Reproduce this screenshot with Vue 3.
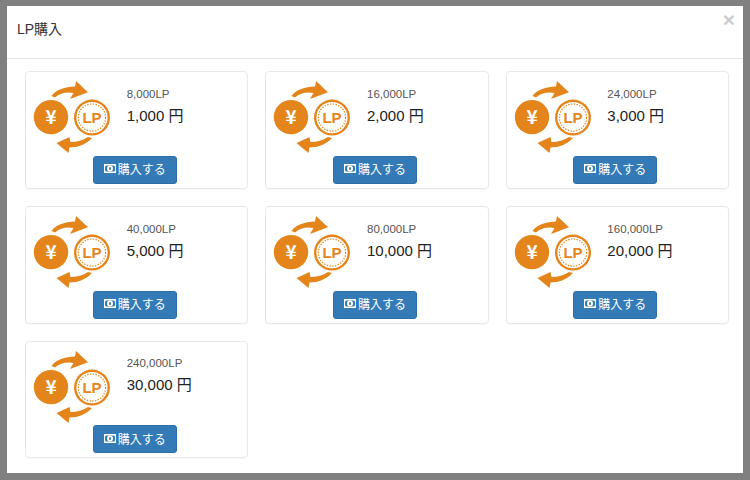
<template>
  <div class="overlay">
    <div class="modal">
      <div class="modal-header">
        <h4 class="modal-title">LP購入</h4>
        <span class="close">×</span>
      </div>
      <div class="modal-body">
        <div v-for="plan in plans" :key="plan.lp" class="plan">
          <div class="plan-top">
            <svg class="plan-icon" width="100.7" height="83.6" viewBox="26 72.4 100.7 83.6">
              <circle cx="51" cy="117.5" r="17.2" fill="#e4851b" />
              <text x="51" y="124.5" class="yen">¥</text>
              <circle cx="92" cy="118" r="18" fill="#e4851b" />
              <circle cx="92" cy="118" r="15.6" fill="#fff" />
              <circle cx="92" cy="118" r="13.6" fill="none" stroke="#e4851b" stroke-width="1.2" stroke-dasharray="1.4 1.4" />
              <text x="92" y="123.5" class="lp">LP</text>
              <path d="M51.5 96.5 C56 90 65 87.5 75 87 L76 81.5 L88 92.7 L70 99.5 L73.5 93.5 C67 92 60 93.5 55 98 Z" fill="#e4851b" />
              <path d="M92 138.5 C86 145 78 148 69.5 148 L68.5 153.5 L56.5 143.3 L69.5 137.3 L70.5 142.5 C77 142.5 83 141 88 137.5 Z" fill="#e4851b" />
            </svg>
            <div class="plan-info">
              <div class="plan-lp">{{ plan.lp }}LP</div>
              <div class="plan-price">{{ plan.price }} 円</div>
            </div>
          </div>
          <button class="buy-button">
            <svg width="12" height="9" viewBox="0 0 12 9">
              <rect width="12" height="9" fill="#fff" />
              <rect x="1" y="1.5" width="10" height="6" rx="1.5" fill="#337ab7" />
              <circle cx="6" cy="4.5" r="3" fill="#fff" />
              <ellipse cx="6" cy="4.5" rx="1" ry="1.6" fill="#337ab7" />
            </svg>
            <span>購入する</span>
          </button>
        </div>
      </div>
    </div>
  </div>
</template>

<script setup>
const plans = [
  { lp: '8,000', price: '1,000' },
  { lp: '16,000', price: '2,000' },
  { lp: '24,000', price: '3,000' },
  { lp: '40,000', price: '5,000' },
  { lp: '80,000', price: '10,000' },
  { lp: '160,000', price: '20,000' },
  { lp: '240,000', price: '30,000' }
]
</script>

<style>
html, body {
  margin: 0;
}
</style>

<style scoped>
.overlay {
  width: 750px;
  height: 480px;
  box-sizing: border-box;
  padding: 6px 7px 7px 7px;
  background: #808080;
  font-family: "Liberation Sans", "Noto Sans CJK JP", sans-serif;
  color: #333;
}

.modal {
  height: 100%;
  background: #fff;
  display: flex;
  flex-direction: column;
}

.modal-header {
  height: 53px;
  flex-shrink: 0;
  box-sizing: border-box;
  border-bottom: 1px solid #e5e5e5;
  padding: 0 10px;
  display: flex;
  align-items: flex-start;
  justify-content: space-between;
}

.modal-title {
  margin: 14px 0 0;
  font-size: 14px;
  line-height: 18px;
  font-weight: 400;
  color: #333;
}

.close {
  margin: 3px -2px 0 0;
  font-size: 21px;
  line-height: 21px;
  font-weight: 700;
  color: #000;
  opacity: 0.2;
}

.modal-body {
  padding: 12.4px 0 0 18px;
  display: grid;
  grid-template-columns: repeat(3, 223.33px);
  column-gap: 17px;
  row-gap: 17px;
  align-content: start;
}

.plan {
  height: 117.6px;
  box-sizing: border-box;
  border: 1px solid #e8e8e8;
  border-radius: 4px;
  box-shadow: 0 1px 1px rgba(0, 0, 0, 0.03);
  display: flex;
  flex-direction: column;
}

.plan-top {
  display: flex;
  height: 83.6px;
}

.plan-icon {
  flex-shrink: 0;
}

.plan-info {
  padding-top: 13.8px;
}

.plan-lp {
  font-size: 11.5px;
  line-height: 16px;
  color: #555;
}

.plan-price {
  margin-top: 4px;
  font-size: 15px;
  line-height: 20px;
  color: #222;
}

.buy-button {
  margin-left: 66.7px;
  width: 84px;
  height: 28px;
  box-sizing: border-box;
  padding: 0 0 2px;
  border: 1px solid #2e6da4;
  border-radius: 3px;
  background: #337ab7;
  color: #fff;
  font-family: inherit;
  font-size: 12px;
  display: flex;
  align-items: center;
  justify-content: center;
  gap: 2px;
}

.yen {
  font-family: "Noto Sans CJK JP", sans-serif;
  font-size: 19px;
  font-weight: 700;
  fill: #fff;
  text-anchor: middle;
}

.lp {
  font-family: "Liberation Sans", sans-serif;
  font-size: 15px;
  font-weight: 700;
  fill: #e4851b;
  text-anchor: middle;
}
</style>
